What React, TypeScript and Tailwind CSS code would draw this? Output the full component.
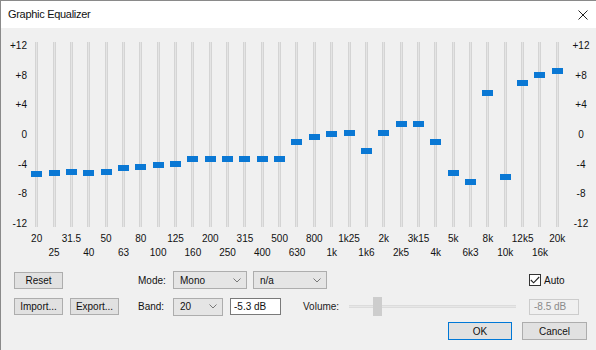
import React from 'react'

const bands: [string, number][] = [
  ['20', -5.3], ['25', -5.1], ['31.5', -5.0], ['40', -5.1], ['50', -5.0], ['63', -4.4],
  ['80', -4.3], ['100', -4.0], ['125', -3.9], ['160', -3.3], ['200', -3.3], ['250', -3.3],
  ['315', -3.3], ['400', -3.3], ['500', -3.3], ['630', -0.9], ['800', -0.3], ['1k', 0.2],
  ['1k25', 0.3], ['1k6', -2.2], ['2k', 0.3], ['2k5', 1.5], ['3k15', 1.5], ['4k', -1.0],
  ['5k', -5.1], ['6k3', -6.3], ['8k', 5.7], ['10k', -5.7], ['12k5', 7.0], ['16k', 8.1], ['20k', 8.6],
]

const scale = ['+12', '+8', '+4', '0', '-4', '-8', '-12']

function Chevron() {
  return (
    <svg width="8" height="5" viewBox="0 0 8 5" className="shrink-0">
      <polyline points="0.5,0.5 4,4 7.5,0.5" fill="none" stroke="#777" strokeWidth="1" />
    </svg>
  )
}

function Select({ value, w }: { value: string; w: string }) {
  return (
    <div className={`${w} h-[18px] flex items-center justify-between pl-[6px] pr-[5px] bg-[#e5e5e5] border border-[#adadad]`}>
      <span>{value}</span>
      <Chevron />
    </div>
  )
}

function Btn({ label, w, primary }: { label: string; w: string; primary?: boolean }) {
  return (
    <div
      className={`${w} flex items-center justify-center bg-[#e1e1e1] border ${
        primary ? 'border-[#0078d7] h-[18px]' : 'border-[#adadad] h-[17px]'
      }`}
    >
      {label}
    </div>
  )
}

export default function App() {
  return (
    <div className="w-[596px] h-[350px] overflow-hidden flex flex-col bg-[#f0f0f0] border-l border-t border-[#8a8a8a] text-[10px] text-[#111] font-['Liberation_Sans',sans-serif]">
      <div className="h-[27px] shrink-0 bg-white flex items-center justify-between pl-[7px] pr-[8px]">
        <span className="text-[11px] tracking-[-0.3px] text-[#111]">Graphic Equalizer</span>
        <svg width="10" height="10" viewBox="0 0 10 10" className="mt-[1px]">
          <path d="M0.5 0.5 L9.5 9.5 M9.5 0.5 L0.5 9.5" stroke="#222" strokeWidth="1" />
        </svg>
      </div>

      <div className="flex items-start pt-[14px]">
        <div className="w-[27px] h-[190px] -mt-[2px] flex flex-col justify-between items-end pr-[1px]">
          {scale.map((s) => (
            <span key={s} className="h-[12px] leading-[12px]">{s}</span>
          ))}
        </div>

        <div className="w-[538px] grid grid-cols-[repeat(31,minmax(0,1fr))]">
          {bands.map(([name, v], i) => (
            <div key={name} className="flex flex-col items-center">
              <div className="relative h-[185px] w-[11px] flex justify-center">
                <div className="w-[3px] h-full bg-[#e4e4e4] border-x border-[#d4d4d4]" />
                <div
                  className="absolute left-0 w-[11px] h-[6px] bg-[#0a78d4]"
                  style={{ top: Math.round(93 - v * 7.4 - 3) }}
                />
              </div>
              <div className="h-[14px] mt-[5px] flex justify-center whitespace-nowrap leading-[14px]">
                {i % 2 === 0 ? name : ''}
              </div>
              <div className="h-[14px] flex justify-center whitespace-nowrap leading-[14px]">
                {i % 2 === 1 ? name : ''}
              </div>
            </div>
          ))}
        </div>

        <div className="w-[30px] h-[190px] -mt-[2px] flex flex-col justify-between items-center">
          {scale.map((s) => (
            <span key={s} className="h-[12px] leading-[12px]">{s}</span>
          ))}
        </div>
      </div>

      <div className="flex items-center pl-[13px] mt-[11px] h-[18px]">
        <Btn label="Reset" w="w-[49px]" />
        <span className="ml-[75px] w-[35px]">Mode:</span>
        <Select value="Mono" w="w-[74px]" />
        <div className="ml-[6px]">
          <Select value="n/a" w="w-[74px]" />
        </div>
        <div className="ml-[202px] flex items-center gap-[3px]">
          <div className="w-[12px] h-[12px] bg-white border border-[#333] flex items-center justify-center">
            <svg width="10" height="8" viewBox="0 0 10 8">
              <polyline points="0.8,4 3.6,6.8 9.2,1" fill="none" stroke="#222" strokeWidth="1.1" />
            </svg>
          </div>
          <span>Auto</span>
        </div>
      </div>

      <div className="flex items-center pl-[13px] mt-[8px] h-[19px]">
        <Btn label="Import..." w="w-[49px]" />
        <div className="ml-[7px]">
          <Btn label="Export..." w="w-[49px]" />
        </div>
        <span className="ml-[19px] w-[35px]">Band:</span>
        <Select value="20" w="w-[50px]" />
        <div className="ml-[7px] w-[51px] h-[17px] bg-white border border-[#7a7a7a] flex items-center pl-[3px]">
          -5.3 dB
        </div>
        <span className="ml-[22px] w-[46px] text-[#222]">Volume:</span>
        <div className="relative w-[167px] h-[19px] flex items-center">
          <div className="w-full h-[3px] bg-[#e7e7e7] border-y border-[#dcdcdc]" />
          <div className="absolute left-[24px] top-0 w-[9px] h-[19px] bg-[#cdcdcd]" />
        </div>
        <div className="ml-[13px] w-[50px] h-[16px] border border-[#cccccc] flex items-center pl-[4px] text-[#8a8a8a]">
          -8.5 dB
        </div>
      </div>

      <div className="flex items-center justify-end pr-[9px] mt-[6px]">
        <Btn label="OK" w="w-[64px]" primary />
        <div className="ml-[10px]">
          <div className="w-[65px] h-[18px] flex items-center justify-center bg-[#e1e1e1] border border-[#adadad]">
            Cancel
          </div>
        </div>
      </div>
    </div>
  )
}
